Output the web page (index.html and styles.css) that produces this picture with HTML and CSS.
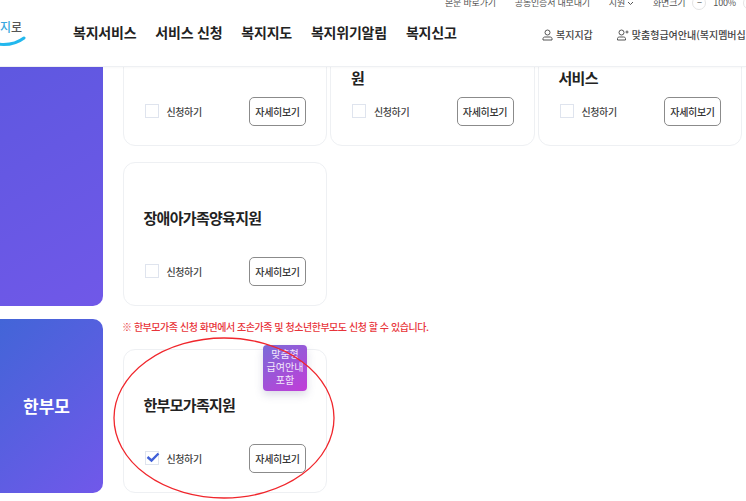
FILE: index.html
```html
<!DOCTYPE html>
<html lang="ko">
<head>
<meta charset="utf-8">
<title>복지로</title>
<link rel="stylesheet" href="styles.css">
</head>
<body>
<div class="page">
  <header class="header">
    <div class="util">
      <span class="util-item">본문 바로가기</span><i class="sep"></i>
      <span class="util-item">공동인증서 내보내기</span><i class="sep"></i>
      <span class="util-item">지원 <svg class="chev" width="7" height="5" viewBox="0 0 7 5"><path d="M1 1l2.500 2.500L6 1" fill="none" stroke="#555"/></svg></span><i class="sep"></i>
      <span class="util-item">화면크기</span>
      <span class="round">−</span>
      <span class="util-item">100%</span>
      <span class="round">+</span>
    </div>
    <div class="bar">
      <div class="logo">
        <span class="logo-text"><b class="logo-a">지</b><b class="logo-b">로</b></span>
        <svg class="logo-arc" width="28" height="14" viewBox="0 0 28 14"><path d="M-3 10c10 1.500 19 0 27-6" fill="none" stroke="#22b8ee" stroke-width="3" stroke-linecap="round"/></svg>
      </div>
      <nav class="nav">
        <a>복지서비스</a><a>서비스 신청</a><a>복지지도</a><a>복지위기알림</a><a>복지신고</a>
      </nav>
      <div class="links">
        <a class="link link-wallet"><svg width="11" height="12" viewBox="0 0 11 12"><circle cx="5.500" cy="3.500" r="2.500" fill="none" stroke="#555"/><path d="M1 11V9.500C1 8.500 2 8 3 8h5c1 0 2 .5 2 1.500V11z" fill="none" stroke="#555"/></svg>복지지갑</a>
        <a class="link"><svg width="12" height="12" viewBox="0 0 12 12"><circle cx="4.500" cy="3.500" r="2.500" fill="none" stroke="#555"/><path d="M.5 11V9.500C.5 8.500 1.500 8 2.500 8h4c1 0 2 .5 2 1.500V11zM10 1.500v3M8.500 3h3" fill="none" stroke="#555"/></svg>맞춤형급여안내(복지멤버십)</a>
      </div>
    </div>
  </header>
  <main class="main">
    <section class="group group-first">
      <div class="side side-tall"></div>
      <div class="cards">
        <article class="card"><h3 class="title">아이돌봄지원</h3><div class="foot"><label class="check"><i class="box"></i>신청하기</label><a class="more">자세히보기</a></div></article>
        <article class="card"><h3 class="title">장애인가족돌봄지<br>원</h3><div class="foot"><label class="check"><i class="box"></i>신청하기</label><a class="more">자세히보기</a></div></article>
        <article class="card"><h3 class="title">발달재활<br>서비스</h3><div class="foot"><label class="check"><i class="box"></i>신청하기</label><a class="more">자세히보기</a></div></article>
        <article class="card"><h3 class="title">장애아가족양육지원</h3><div class="foot"><label class="check"><i class="box"></i>신청하기</label><a class="more">자세히보기</a></div></article>
      </div>
    </section>
    <section class="group group-second">
      <div class="side side-short">한부모</div>
      <div class="col">
        <p class="note">※ 한부모가족 신청 화면에서 조손가족 및 청소년한부모도 신청 할 수 있습니다.</p>
        <div class="cards">
          <article class="card">
            <span class="badge">맞춤형<br>급여안내<br>포함</span>
            <h3 class="title">한부모가족지원</h3>
            <div class="foot"><label class="check"><i class="box box-on"><svg width="16" height="12" viewBox="0 0 16 12"><path d="M2.500 5l4 3.500L13.500 1.500" fill="none" stroke="#3f5fd8" stroke-width="2.400"/></svg></i>신청하기</label><a class="more">자세히보기</a></div>
          </article>
        </div>
      </div>
    </section>
  </main>
  <svg class="ring" width="746" height="501" viewBox="0 0 746 501"><ellipse cx="224" cy="418" rx="110" ry="80" fill="none" stroke="#f0262c" stroke-width="1.300"/></svg>
</div>
</body>
</html>
```
FILE: styles.css
```css
* { box-sizing: border-box; }
html, body { margin: 0; height: 100%; }
body { background: #fff; overflow: hidden; font-family: "Noto Sans CJK KR", "Noto Sans", sans-serif; color: #222; }
.page { position: relative; width: 746px; height: 501px; overflow: hidden; }
.header { position: relative; z-index: 2; height: 67px; background: #fff; border-bottom: 1px solid #eef0f3; box-shadow: 0 1px 2px rgba(0,0,0,.03); overflow: hidden; }
.util { display: flex; align-items: center; height: 8px; margin-top: -1px; padding-left: 445px; font-size: 9px; letter-spacing: -.2px; color: #555; white-space: nowrap; }
.util-item { display: inline-flex; align-items: center; gap: 2px; line-height: 8px; }
.sep { width: 1px; height: 8px; background: #ddd; margin: 0 10px 0 9px; }
.round { flex: none; width: 14px; height: 14px; margin: 0 7px 0 7px; border: 1px solid #e4e4e4; border-radius: 50%; line-height: 11px; text-align: center; font-style: normal; }
.bar { position: relative; display: flex; align-items: center; height: 52px; }
.logo { position: absolute; left: 0; top: 13px; width: 30px; height: 36px; }
.logo-text { display: block; font-size: 12px; line-height: 14px; white-space: nowrap; }
.logo-a { font-weight: 500; color: #3aa7e0; }
.logo-b { font-weight: 500; color: #555; }
.logo-arc { display: block; }
.nav { display: flex; gap: 19px; margin: -2px 0 0 73px; font-size: 14px; font-weight: 700; letter-spacing: -.22px; color: #222; white-space: nowrap; }
.links { position: absolute; left: 542px; top: 20px; display: flex; gap: 24px; font-size: 10px; color: #444; white-space: nowrap; }
.link { display: inline-flex; align-items: center; gap: 3px; font-weight: 500; }
.main { margin-top: -65px; }
.group { display: flex; align-items: flex-start; gap: 19.500px; margin-left: -20px; }
.group-second { margin-top: 13.500px; }
.side { flex: none; width: 123px; border-radius: 10px; color: #fff; }
.side-tall { height: 303.500px; background: linear-gradient(150deg, #5a58de 0%, #7058e8 100%); }
.side-short { display: flex; align-items: center; justify-content: center; height: 174px; padding: 0 0 2px 10px; font-size: 17px; font-weight: 700; background: linear-gradient(135deg, #3f66d6 0%, #7158ea 100%); }
.col { flex: none; }
.note { margin: 0 0 15px -.5px; height: 15px; font-size: 10px; line-height: 15px; font-weight: 500; color: #e8343a; letter-spacing: -.46px; white-space: nowrap; }
.cards { display: grid; grid-template-columns: repeat(3, 204.500px); gap: 16.500px 3px; }
.card { position: relative; display: flex; flex-direction: column; height: 143.500px; padding: 45px 20px 19px; border: 1px solid #eef0f3; border-radius: 12px; background: #fff; }
.title { flex: 1; margin: 0; font-size: 15px; line-height: 20px; font-weight: 700; color: #222; letter-spacing: -.7px; }
.foot { display: flex; align-items: center; justify-content: space-between; height: 29px; }
.check { display: flex; align-items: center; gap: 8px; padding-left: 1px; font-size: 10px; font-weight: 500; letter-spacing: -.4px; color: #444; }
.box { position: relative; flex: none; width: 14px; height: 14px; border: 1px solid #dfe4ee; background: #fff; }
.box svg { position: absolute; left: -1px; top: 0; }
.more { display: flex; align-items: center; justify-content: center; width: 57px; height: 29px; border: 1px solid #8b8b8b; border-radius: 5px; font-size: 10px; font-weight: 500; letter-spacing: -.3px; color: #333; }
.badge { position: absolute; top: -5px; right: 19px; width: 44px; height: 46px; padding-top: 2px; border-radius: 4px; font-size: 10px; line-height: 13px; text-align: center; color: #f2e8fb; background: linear-gradient(145deg, #7a6cd8 0%, #c23cd8 100%); box-shadow: 0 4px 8px rgba(90,90,140,.22); }
.ring { position: absolute; left: 0; top: 0; z-index: 3; pointer-events: none; }
```
